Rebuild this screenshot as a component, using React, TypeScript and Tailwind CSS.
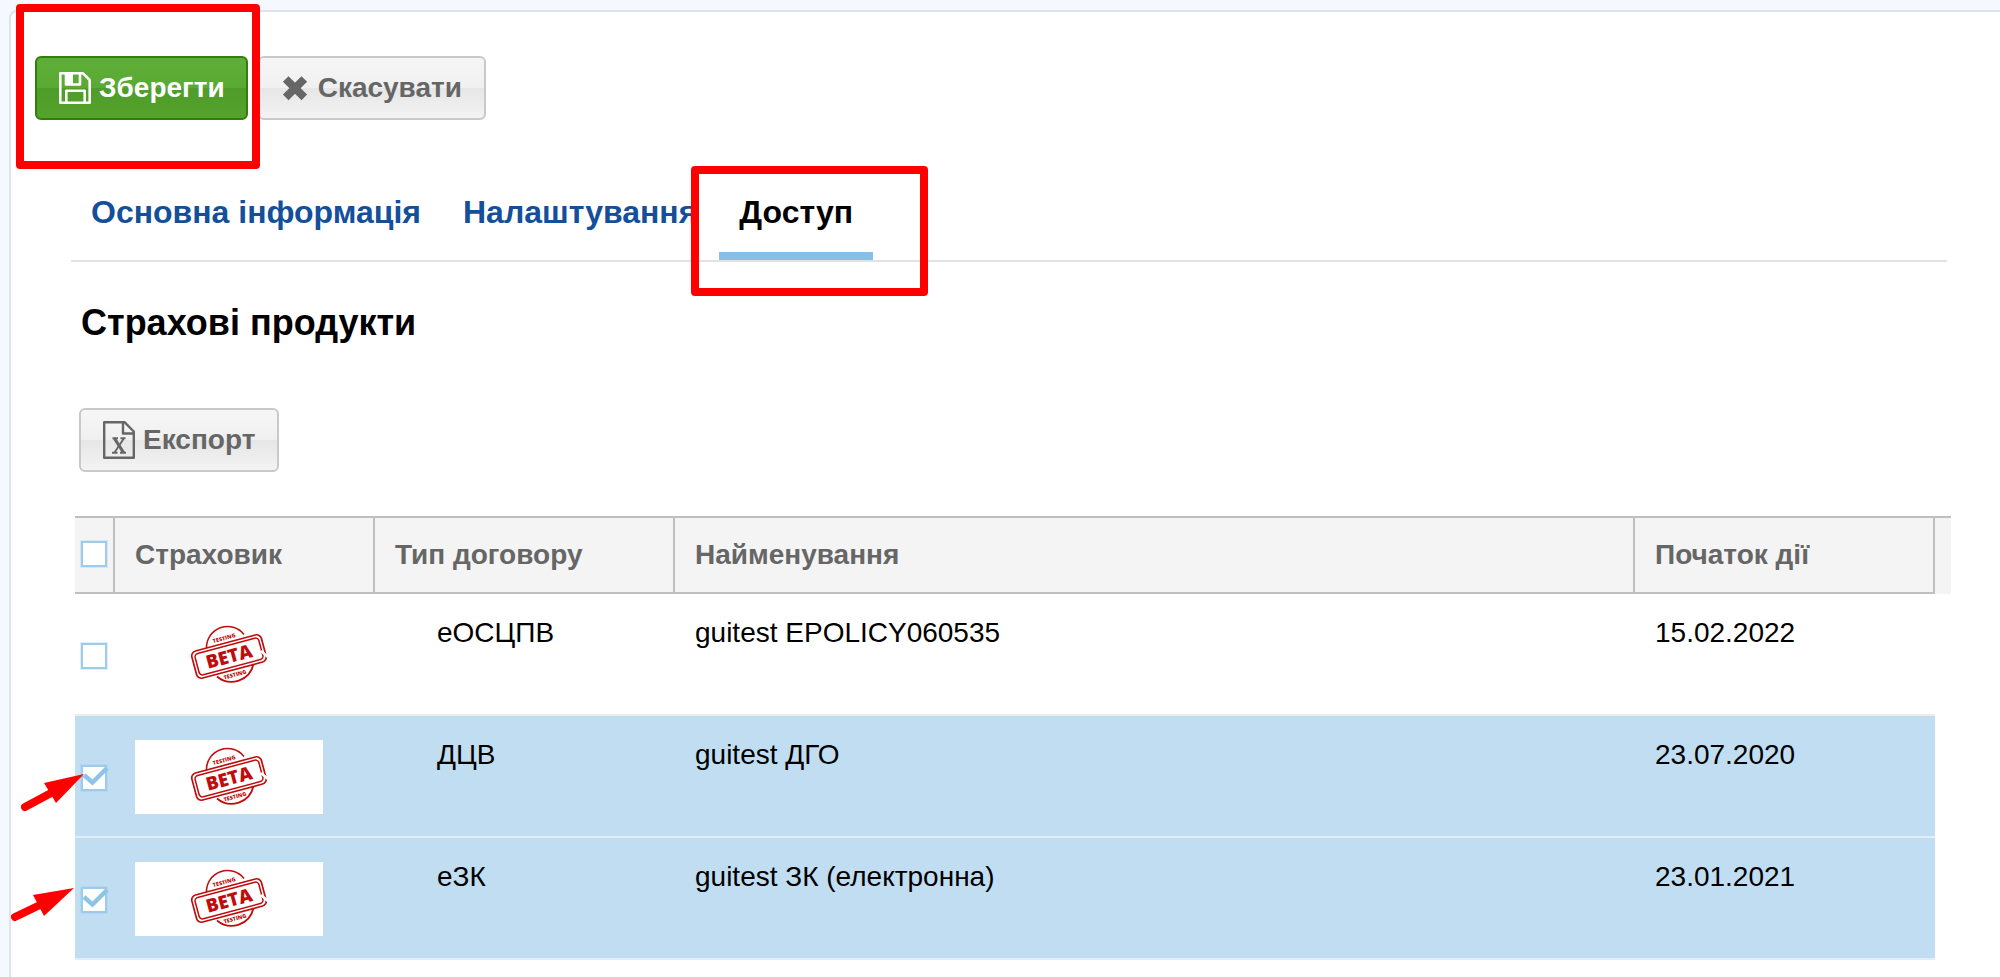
import { useState } from "react";

const rows = [
  { id: "r1", type: "еОСЦПВ", name: "guitest EPOLICY060535", date: "15.02.2022" },
  { id: "r2", type: "ДЦВ", name: "guitest ДГО", date: "23.07.2020" },
  { id: "r3", type: "еЗК", name: "guitest ЗК (електронна)", date: "23.01.2021" },
];

const grayButton =
  "flex h-16 items-center rounded-md border-2 border-[#c9c9c9] bg-[linear-gradient(#f6f6f6,#f0f0f0_50%,#e6e6e6_50%,#f3f3f3)] text-[28px] leading-8 font-bold text-[#666666]";

const tab = "border-b-8 px-5 pt-2.5 pb-[22px]";
const headCell = "border-y-2 border-r-2 border-[#bfbfbf] py-0 pl-5";

function SaveIcon() {
  return (
    <svg width="32" height="32" viewBox="0 0 32 32" fill="none" stroke="#fff" strokeWidth="2.6" strokeLinejoin="round" aria-hidden="true">
      <path d="M1.3 1.3H24L30.7 8V30.7H1.3Z" />
      <path d="M7 1.5V12.5H21V1.5" />
      <path d="M6 2H14V13H6Z" fill="#fff" stroke="none" />
      <path d="M7.3 30V18.8H25.7V30" />
    </svg>
  );
}

function CrossIcon() {
  return (
    <svg width="26" height="26" viewBox="0 0 26 26" fill="none" stroke="#666" strokeWidth="8" aria-hidden="true">
      <path d="M3.7 4L22.3 22.3M22.3 4L3.7 22.3" />
    </svg>
  );
}

function ExcelIcon() {
  return (
    <svg width="32" height="38" viewBox="0 0 32 38" fill="none" stroke="#666" strokeWidth="2.4" strokeLinejoin="round" aria-hidden="true">
      <path d="M1.2 1.2H21.5L30.8 10.5V36.8H1.2Z" />
      <path d="M20 1.2V12.5H30.8" />
      <path d="M11.5 17.5L20.5 31.5" strokeWidth="3.2" />
      <path d="M20.5 18L11.5 31.5M9.5 17.3H15M17.5 17.3H22.5M9 31.8H14.5M17 31.8H23" strokeWidth="1.9" />
    </svg>
  );
}

function Stamp() {
  return (
    <svg width="188" height="74" viewBox="0 -1 188 74" className="block bg-white" role="img" aria-label="BETA TESTING">
      <g fill="none" stroke="#bf0d0d">
        <path d="M71.5 29A21 21 0 0 1 109 15.5" strokeWidth="1.6" />
        <path d="M82 57.5A22.5 22.5 0 0 0 118.5 45" strokeWidth="1.8" />
        <g transform="rotate(-15 94 37.5)">
          <rect x="58" y="23.5" width="72" height="28" rx="5" strokeWidth="1.7" />
          <rect x="61" y="26.5" width="66" height="22" rx="3.5" strokeWidth="1.5" />
        </g>
        <path d="M126 32L133 38" stroke="#fff" strokeWidth="2.5" />
      </g>
      <g fill="#bf0d0d" fontFamily="Open Sans, Liberation Sans, sans-serif" fontWeight="800" textAnchor="middle" transform="rotate(-15 94 37.5)">
        <text x="94" y="44" fontSize="18.5">BETA</text>
        <text x="94" y="20.5" fontSize="5.5">TESTING</text>
        <text x="95" y="58.5" fontSize="5.5">TESTING</text>
      </g>
    </svg>
  );
}

function CheckBox({ checked, label, onChange }: { checked: boolean; label: string; onChange: () => void }) {
  return (
    <span className="relative block size-[26px]">
      <input
        type="checkbox"
        aria-label={label}
        checked={checked}
        onChange={onChange}
        className="block size-[26px] appearance-none border-2 border-[#9ccbec] bg-white outline outline-[#9ccbec]/30"
      />
      {checked && (
        <svg className="pointer-events-none absolute top-0 left-0 overflow-visible" width="28" height="26" viewBox="0 0 28 26" fill="none" stroke="#8fc4e8" strokeWidth="4.5" aria-hidden="true">
          <path d="M3 10L11.5 17.5L26 3" />
        </svg>
      )}
    </span>
  );
}

export default function App() {
  const [selected, setSelected] = useState<string[]>(["r2", "r3"]);
  const toggle = (id: string) =>
    setSelected((s) => (s.includes(id) ? s.filter((x) => x !== id) : [...s, id]));
  const all = selected.length === rows.length;

  return (
    <div className="relative min-h-screen overflow-hidden bg-[#f5f8ff] pt-2.5 pl-[9px] font-['Liberation_Sans',Arial,sans-serif] text-[28px] leading-8 text-black">
      <main className="min-h-screen rounded-tl-lg border-t-2 border-l-2 border-[#dfe3ee] bg-white pt-11 pl-6">
        <div className="flex gap-2.5">
          <button className="flex h-16 items-center gap-2 rounded-md border-2 border-[#2f7f0e] bg-[linear-gradient(#5fae37,#5aa933_50%,#4f9c2a_50%,#54a32c)] pr-[21px] pl-[22px] text-[28px] leading-8 font-bold text-white">
            <SaveIcon />
            Зберегти
          </button>
          <button className={`${grayButton} gap-2.5 px-[22px]`}>
            <CrossIcon />
            Скасувати
          </button>
        </div>

        <nav className="mt-16 mr-[53px] ml-9 flex gap-0.5 border-b-2 border-[#e2e2e2] text-[32px] leading-9 font-bold">
          <a href="#info" className={`${tab} border-transparent text-[#134f9b]`}>Основна інформація</a>
          <a href="#settings" className={`${tab} border-transparent text-[#134f9b]`}>Налаштування</a>
          <a href="#access" aria-current="page" className={`${tab} border-[#87bfe6]`}>Доступ</a>
        </nav>

        <section className="mr-[49px] ml-10">
          <h1 className="mt-[41px] ml-1.5 text-4xl leading-10 font-bold">Страхові продукти</h1>
          <button className={`${grayButton} mt-[65px] ml-1 gap-2 px-[22px]`}>
            <ExcelIcon />
            Експорт
          </button>

          <table className="mt-11 w-full table-fixed border-separate border-spacing-0 text-left">
            <colgroup>
              <col className="w-10" />
              <col className="w-[260px]" />
              <col className="w-[300px]" />
              <col />
              <col className="w-[300px]" />
              <col className="w-4" />
            </colgroup>
            <thead>
              <tr className="h-[78px] bg-[#f4f4f4] text-[#666666]">
                <th className="border-y-2 border-r-2 border-[#bfbfbf] p-0 pb-0.5 pl-1.5">
                  <CheckBox checked={all} label="Вибрати всі" onChange={() => setSelected(all ? [] : rows.map((r) => r.id))} />
                </th>
                <th className={headCell}>Страховик</th>
                <th className={headCell}>Тип договору</th>
                <th className={headCell}>Найменування</th>
                <th className={headCell}>Початок дії</th>
                <th className="border-t-2 border-[#bfbfbf] p-0" />
              </tr>
            </thead>
            <tbody>
              {rows.map((r) => {
                const on = selected.includes(r.id);
                const cell = on ? "border-b-2 border-[#e0eefa] bg-[#c1ddf1]" : "border-b-2 border-[#ececec]";
                return (
                  <tr key={r.id} className="h-[122px]">
                    <td className={`${cell} pt-1 pr-0 pb-0 pl-1.5`}>
                      <CheckBox checked={on} label={r.name} onChange={() => toggle(r.id)} />
                    </td>
                    <td className={`${cell} pt-0.5 pr-0 pb-0 pl-5`}><Stamp /></td>
                    <td className={`${cell} pt-[23px] pr-0 pb-0 pl-[62px] align-top`}>{r.type}</td>
                    <td className={`${cell} pt-[23px] pr-0 pb-0 pl-5 align-top`}>{r.name}</td>
                    <td className={`${cell} pt-[23px] pr-0 pb-0 pl-5 align-top`}>{r.date}</td>
                    <td className="p-0" />
                  </tr>
                );
              })}
            </tbody>
          </table>
        </section>
      </main>

      <div className="pointer-events-none absolute top-1 left-4 h-[165px] w-[244px] rounded border-8 border-[#ff0000]" />
      <div className="pointer-events-none absolute top-[166px] left-[691px] h-[130px] w-[237px] rounded border-8 border-[#ff0000]" />
      <svg className="pointer-events-none absolute top-[774px] left-[21px]" width="64" height="38" viewBox="0 0 64 38" fill="#f00" aria-hidden="true">
        <path d="M4 33L31 18.5" stroke="#f00" strokeWidth="8" strokeLinecap="round" />
        <path d="M63 0L23 9L35 29Z" />
      </svg>
      <svg className="pointer-events-none absolute top-[888px] left-[11px]" width="64" height="38" viewBox="0 0 64 38" fill="#f00" aria-hidden="true">
        <path d="M4 29L31 16" stroke="#f00" strokeWidth="8" strokeLinecap="round" />
        <path d="M63 0L22 7L33 28Z" />
      </svg>
    </div>
  );
}
